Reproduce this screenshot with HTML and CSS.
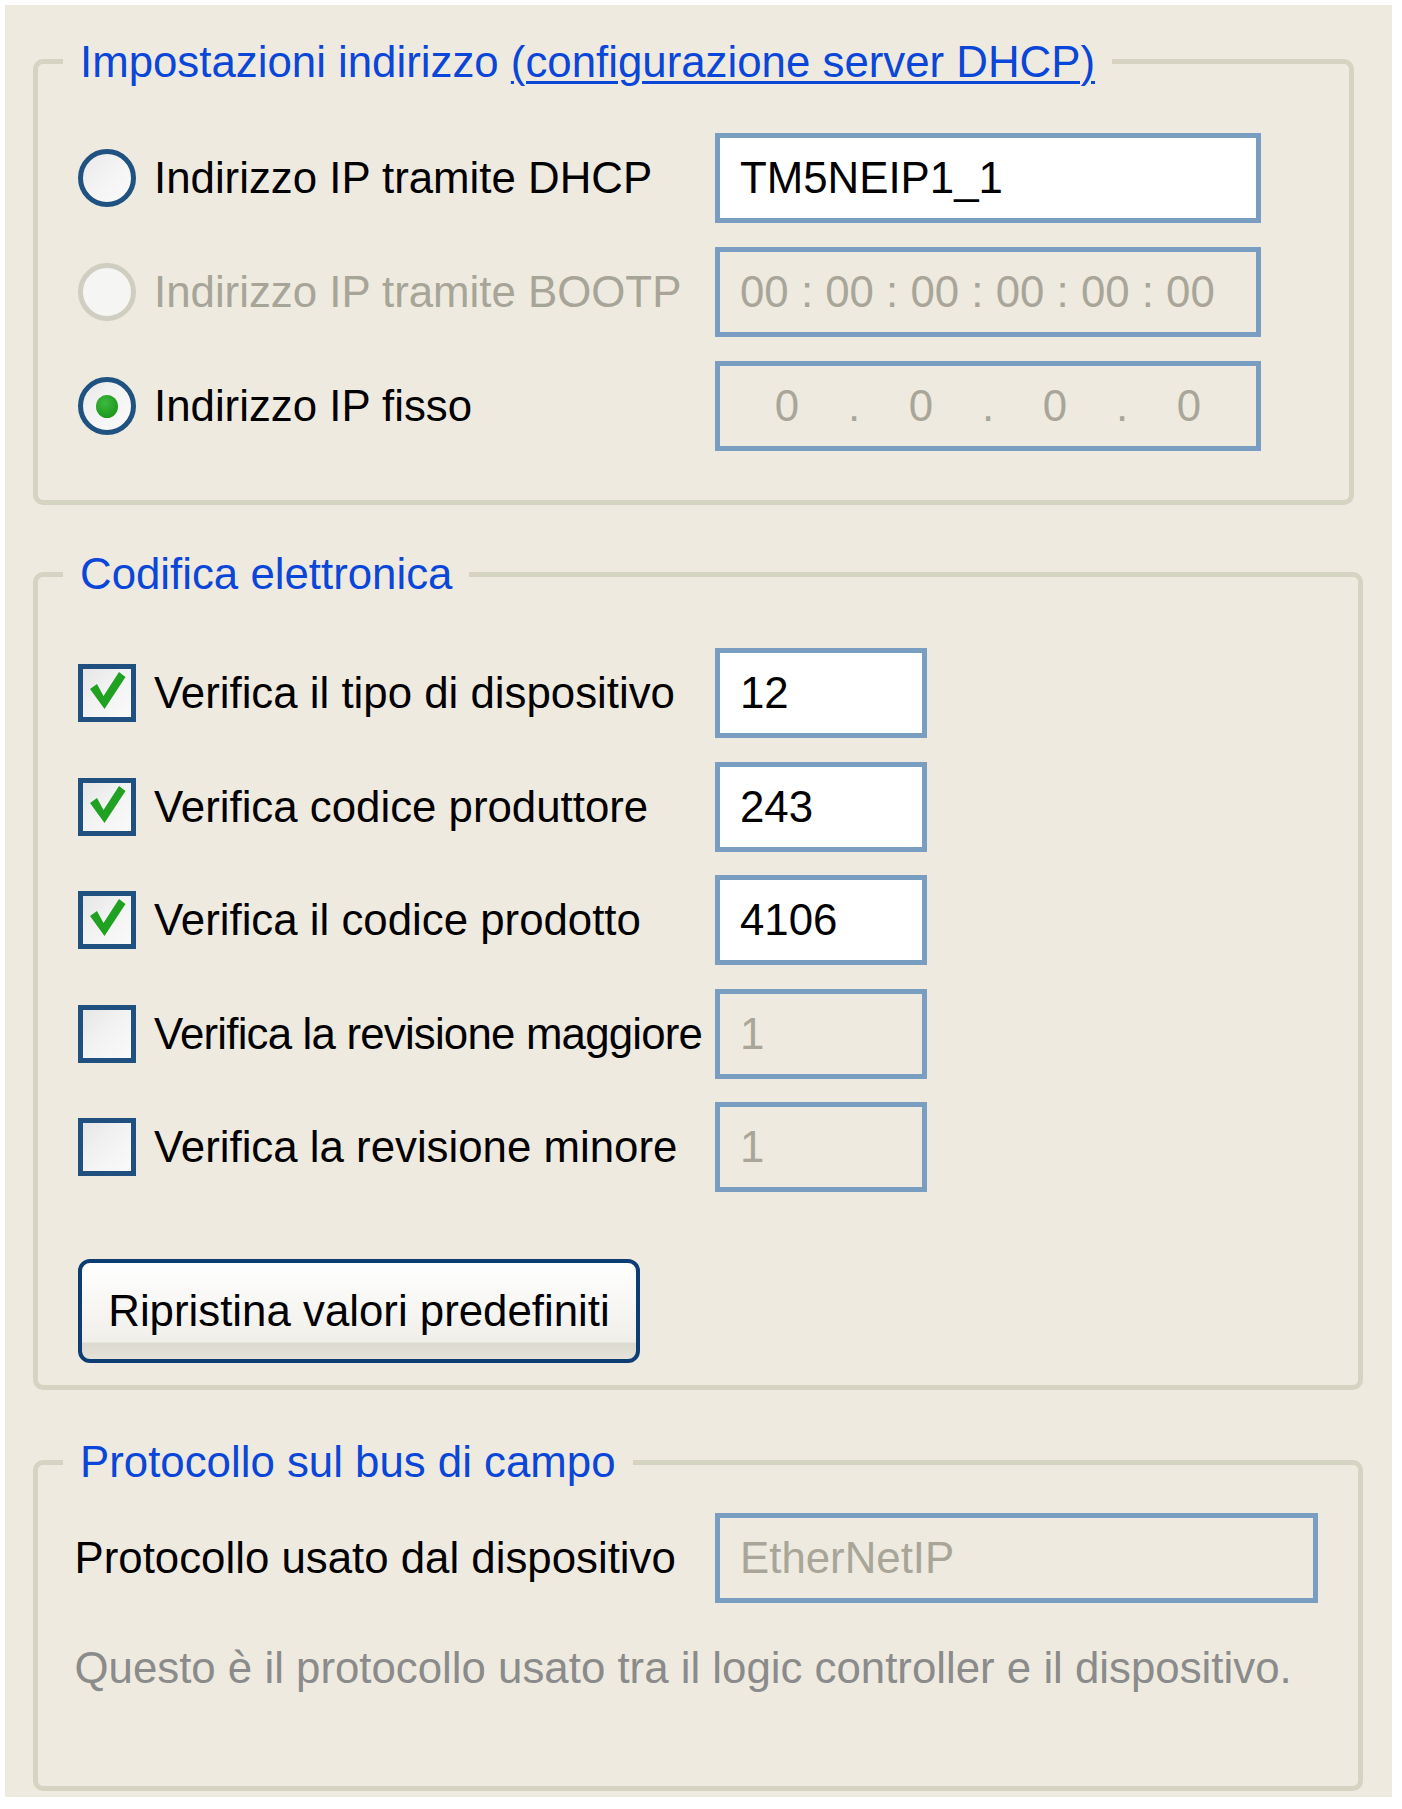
FILE: index.html
```html
<!DOCTYPE html>
<html lang="it">
<head>
    <meta charset="UTF-8">
    <title>Impostazioni dispositivo</title>
    <link rel="stylesheet" href="styles.css">
</head>
<body>
    <div class="page">
        <fieldset class="group group-address">
            <legend>Impostazioni indirizzo <a href="#">(configurazione server DHCP)</a></legend>
            <div class="group-body">
                <div class="row">
                    <div class="opt">
                        <span class="radio"></span>
                        <span>Indirizzo IP tramite DHCP</span>
                    </div>
                    <div class="field field-wide">TM5NEIP1_1</div>
                </div>
                <div class="row">
                    <div class="opt disabled">
                        <span class="radio"></span>
                        <span>Indirizzo IP tramite BOOTP</span>
                    </div>
                    <div class="field field-wide off">00 : 00 : 00 : 00 : 00 : 00</div>
                </div>
                <div class="row">
                    <div class="opt">
                        <span class="radio checked"></span>
                        <span>Indirizzo IP fisso</span>
                    </div>
                    <div class="field field-wide off ip">
                        <span>0</span><span>.</span><span>0</span><span>.</span><span>0</span><span>.</span><span>0</span>
                    </div>
                </div>
            </div>
        </fieldset>

        <fieldset class="group group-keying">
            <legend>Codifica elettronica</legend>
            <div class="group-body">
                <div class="row">
                    <div class="opt">
                        <span class="check"><svg viewBox="0 0 48 48"><polygon points="7,20 14,15 20.5,27 36,3 42.5,8 21.5,40"/></svg></span>
                        <span>Verifica il tipo di dispositivo</span>
                    </div>
                    <div class="field field-short">12</div>
                </div>
                <div class="row">
                    <div class="opt">
                        <span class="check"><svg viewBox="0 0 48 48"><polygon points="7,20 14,15 20.5,27 36,3 42.5,8 21.5,40"/></svg></span>
                        <span>Verifica codice produttore</span>
                    </div>
                    <div class="field field-short">243</div>
                </div>
                <div class="row">
                    <div class="opt">
                        <span class="check"><svg viewBox="0 0 48 48"><polygon points="7,20 14,15 20.5,27 36,3 42.5,8 21.5,40"/></svg></span>
                        <span>Verifica il codice prodotto</span>
                    </div>
                    <div class="field field-short">4106</div>
                </div>
                <div class="row">
                    <div class="opt">
                        <span class="check"></span>
                        <span class="tight">Verifica la revisione maggiore</span>
                    </div>
                    <div class="field field-short off">1</div>
                </div>
                <div class="row">
                    <div class="opt">
                        <span class="check"></span>
                        <span>Verifica la revisione minore</span>
                    </div>
                    <div class="field field-short off">1</div>
                </div>
                <button type="button" class="reset">Ripristina valori predefiniti</button>
            </div>
        </fieldset>

        <fieldset class="group group-protocol">
            <legend>Protocollo sul bus di campo</legend>
            <div class="group-body">
                <div class="row">
                    <div class="opt">Protocollo usato dal dispositivo</div>
                    <div class="field field-long off">EtherNetIP</div>
                </div>
                <p class="note">Questo è il protocollo usato tra il logic controller e il dispositivo.</p>
            </div>
        </fieldset>
    </div>
</body>
</html>
```

FILE: styles.css
```css
body {
    margin: 0;
    background-color: #fff;
    font-family: "Liberation Sans", Arial, sans-serif;
    font-size: 43.8px;
    color: #000;
}
.page {
    margin: 5px 10px 12px 5px;
    padding: 31.5px 29px 6px 28px;
    background-color: #eeeadf;
}
.group {
    margin: 0;
    padding: 0;
    border: 5px solid #d5d3c1;
    border-radius: 10px;
    min-width: 0;
}
.group legend {
    margin-left: 25px;
    padding: 0 17px;
    line-height: 50px;
    color: #0a46d8;
    white-space: nowrap;
}
.group legend a {
    color: #0a46d8;
    text-decoration: underline;
    text-decoration-thickness: 3px;
    text-underline-offset: 4px;
}
.group-body {
    display: flex;
    flex-direction: column;
    align-items: flex-start;
    padding-left: 40px;
}
.group-address {
    margin-right: 9px;
}
.group-address .group-body {
    gap: 24px;
    padding-top: 46.5px;
    padding-bottom: 49px;
}
.group-keying {
    margin-top: 44.2px;
}
.group-keying .group-body {
    gap: 23.6px;
    padding-top: 48.8px;
    padding-bottom: 22px;
}
.group-protocol {
    margin-top: 47.5px;
}
.group-protocol .group-body {
    padding-top: 25.5px;
    padding-bottom: 93px;
    padding-left: 36.5px;
}
.group-protocol .opt {
    width: 640.5px;
}
.row {
    display: flex;
    align-items: center;
    height: 90px;
}
.opt {
    width: 637px;
    display: flex;
    align-items: center;
    gap: 18px;
    white-space: nowrap;
}
.opt.disabled {
    color: #a7a597;
}
.tight {
    letter-spacing: -0.8px;
}
.radio {
    box-sizing: border-box;
    width: 58px;
    height: 58px;
    flex: none;
    display: flex;
    align-items: center;
    justify-content: center;
    border: 5px solid #1f5280;
    border-radius: 50%;
    background: linear-gradient(135deg, #e9e9e9 0%, #f3f3f3 45%, #fbfbfb 100%);
}
.opt.disabled .radio {
    border-color: #d0cdc1;
    background: #f5f5f4;
}
.radio.checked::after {
    content: "";
    width: 22px;
    height: 23px;
    border-radius: 50%;
    background: radial-gradient(circle at 40% 35%, #3cb83c, #1f9a1f 70%);
}
.check {
    box-sizing: border-box;
    width: 58px;
    height: 58px;
    flex: none;
    border: 5px solid #1f5080;
    background: linear-gradient(135deg, #e6e6e6 0%, #f2f2f2 45%, #fafafa 100%);
}
.check svg {
    display: block;
    width: 48px;
    height: 48px;
    fill: #21a121;
}
.field {
    box-sizing: border-box;
    height: 90px;
    display: flex;
    align-items: center;
    padding-left: 20px;
    border: 5px solid #7a9dc2;
    background-color: #fff;
    white-space: nowrap;
}
.field.off {
    background-color: #eeeadf;
    color: #a9a699;
}
.field-wide {
    width: 546px;
}
.field-short {
    width: 212px;
}
.field-long {
    width: 603px;
}
.ip {
    justify-content: center;
    padding-left: 0;
}
.ip span {
    width: 67px;
    text-align: center;
}
.reset {
    box-sizing: border-box;
    width: 562px;
    height: 104px;
    margin-top: 43px;
    padding: 0;
    font: inherit;
    color: #000;
    border: 4px solid #0c3e73;
    border-radius: 12px;
    background: linear-gradient(to bottom, #ffffff 0%, #f4f3ef 60%, #efeee9 82%, #dcd9cf 84%, #e4e2d9 100%);
    cursor: pointer;
}
.note {
    margin: 40px 0 0;
    line-height: 50px;
    color: #8b8b8b;
    white-space: nowrap;
}
```
